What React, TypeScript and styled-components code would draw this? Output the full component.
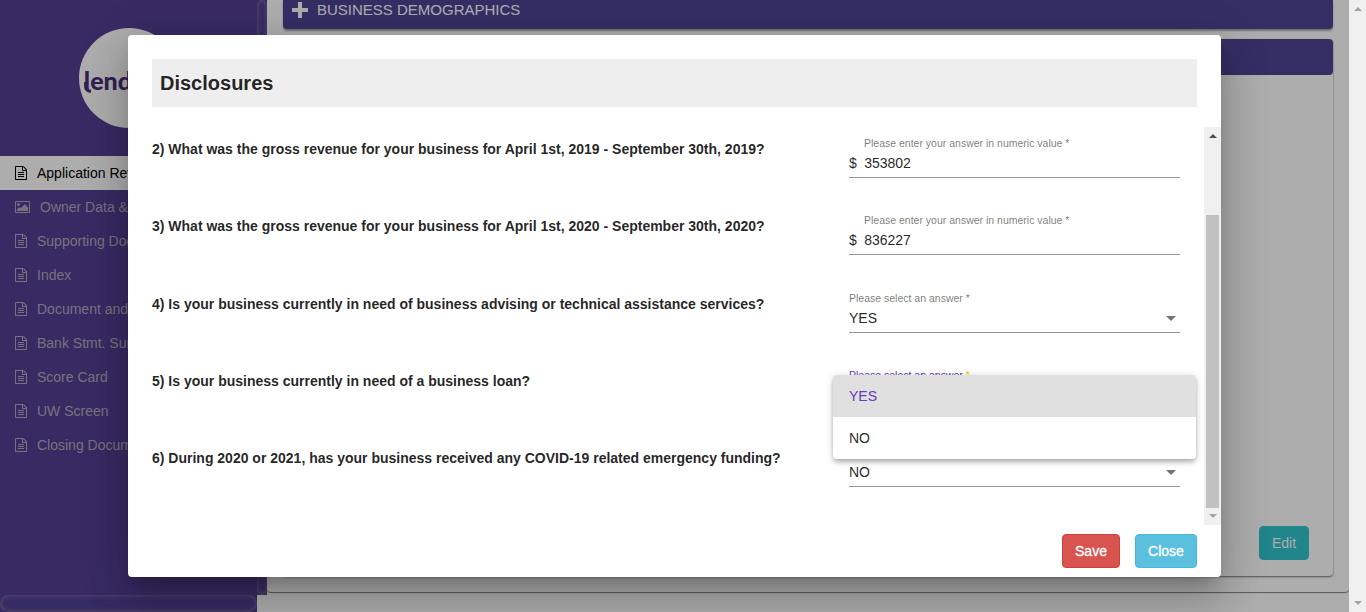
import React from 'react';
import styled, { createGlobalStyle } from 'styled-components';

const GlobalStyle = createGlobalStyle`
  * { box-sizing: border-box; }
  html, body { margin: 0; padding: 0; height: 100%; overflow: hidden; background: #fff; }
  body { font-family: "Liberation Sans", Arial, sans-serif; font-size: 14px; }
`;

const Page = styled.div`
  display: flex;
  width: 1366px;
  height: 612px;
  position: relative;
  overflow: hidden;
`;

const SidebarArea = styled.aside`
  flex: none;
  width: 267px;
  display: flex;
  flex-direction: column;
`;
const SidebarTop = styled.div`
  display: flex;
  height: 595px;
`;
const Sidebar = styled.div`
  width: 257px;
  background: #543f94;
  padding-top: 28px;
  overflow: hidden;
`;
const Thumb = styled.div<{ $horizontal?: boolean }>`
  flex: none;
  width: ${p => (p.$horizontal ? '257px' : '10px')};
  height: ${p => (p.$horizontal ? '17px' : '595px')};
  background: #543f94;
  &::after {
    content: '';
    display: block;
    width: 100%;
    height: 100%;
    border-radius: 10px;
    background: #503f94;
    box-shadow: inset 0 0 5px rgba(150, 140, 165, 0.85);
  }
`;
const Logo = styled.div`
  width: 100px;
  height: 100px;
  margin: 0 0 28px 79px;
  border-radius: 50%;
  background: #fff;
  color: #4b2f7c;
  display: flex;
  align-items: center;
  padding: 3px 0 0 4px;
  font: 900 25px/30px Lato, sans-serif;
`;
const LogoTail = styled.svg`
  flex: none;
  margin: 17px -9.6px 0 1.4px;
`;
const NavItem = styled.div<{ $active?: boolean }>`
  height: 34px;
  display: flex;
  align-items: center;
  gap: 10px;
  padding-left: 15px;
  white-space: nowrap;
  color: ${p => (p.$active ? '#000' : '#b0a9b8')};
  background: ${p => (p.$active ? '#fff' : 'transparent')};
`;

const Main = styled.main`
  flex: 1;
  background: #fff;
`;
const OuterCard = styled.section`
  height: 592px;
  padding: 0 16px;
  border-radius: 0 0 4px 4px;
  box-shadow: 0 1px 1px rgba(0, 0, 0, 0.5);
`;
const PanelHeader = styled.div<{ $height: number }>`
  height: ${p => p.$height}px;
  border-radius: 4px;
  background: #4e4596;
`;
const ClosedPanel = styled(PanelHeader)`
  border-radius: 0 0 4px 4px;
  margin-bottom: 10px;
  padding: 0 0 10px 9px;
  display: flex;
  align-items: center;
  gap: 9px;
  color: #fff;
  font-size: 15px;
  box-shadow: 0 2px 2px rgba(0, 0, 0, 0.35);
`;
const OpenPanel = styled.div`
  height: 537px;
  display: flex;
  flex-direction: column;
  justify-content: space-between;
  border-radius: 4px;
  box-shadow: 0 1px 2px rgba(0, 0, 0, 0.55);
`;

const Button = styled.button<{ $bg: string; $border: string; $width: number }>`
  width: ${p => p.$width}px;
  height: 34px;
  padding: 0;
  border: 1px solid ${p => p.$border};
  border-radius: 4px;
  background: ${p => p.$bg};
  color: #fff;
  font: 14px "Liberation Sans", Arial, sans-serif;
`;
const DialogButton = styled(Button)`
  -webkit-text-stroke: 0.3px #fff;
`;
const EditButton = styled(Button)`
  align-self: flex-end;
  margin: 0 24px 16px 0;
`;

const ScrollTrack = styled.div`
  flex: none;
  width: 17px;
  height: 100%;
  background: #f0f0f0;
  display: flex;
  flex-direction: column;
  justify-content: space-between;
  align-items: center;
  padding: 7px 0;
`;
const PageScroll = styled(ScrollTrack)`
  position: relative;
  z-index: 2;
`;
const ScrollThumb = styled.div`
  width: 13px;
  height: 293px;
  margin: 73px 0 2px;
  background: #c1c1c1;
`;

const Backdrop = styled.div`
  position: absolute;
  inset: 0 17px 0 0;
  background: rgba(0, 0, 0, 0.32);
`;
const Dialog = styled.div`
  position: absolute;
  left: 128px;
  top: 35px;
  width: 1093px;
  height: 542px;
  padding-top: 24px;
  border-radius: 4px;
  background: #fff;
  color: rgba(0, 0, 0, 0.87);
  display: flex;
  flex-direction: column;
  box-shadow: 0 11px 15px -7px rgba(0, 0, 0, 0.2), 0 24px 38px 3px rgba(0, 0, 0, 0.14),
    0 9px 46px 8px rgba(0, 0, 0, 0.12);
`;
const Title = styled.h2`
  flex: none;
  height: 48px;
  margin: 0 24px 20px;
  padding-left: 8px;
  background: #eee;
  font-size: 20px;
  line-height: 48px;
`;
const Scroller = styled.div`
  flex: none;
  height: 398px;
  display: flex;
  justify-content: space-between;
`;
const Questions = styled.div`
  padding-left: 24px;
`;
const Row = styled.div`
  display: flex;
  height: 77.25px;
`;
const Question = styled.div`
  width: 697px;
  padding-top: 12px;
  font-weight: 700;
  line-height: 20px;
`;
const Field = styled.div`
  width: 331px;
  height: 51px;
  border-bottom: 1px solid #949494;
`;
const Label = styled.div<{ $indent?: boolean; $focused?: boolean }>`
  padding: 9px 0 0 ${p => (p.$indent ? '15px' : '0')};
  height: 26px;
  font-size: 10.5px;
  line-height: 15px;
  color: ${p => (p.$focused ? '#673ab7' : 'rgba(0, 0, 0, 0.54)')};
  span { color: ${p => (p.$focused ? '#ffc107' : 'inherit')}; }
`;
const Value = styled.div`
  display: flex;
  align-items: center;
  line-height: 20px;
  gap: 7.4px;
`;
const Arrow = styled.i`
  margin: 1px 4px 0 auto;
  border: 5px solid transparent;
  border-top-color: #757575;
  border-bottom: 0;
`;
const Actions = styled.div`
  display: flex;
  justify-content: flex-end;
  gap: 15px;
  padding: 9px 24px 0;
`;
const Menu = styled.div`
  position: absolute;
  left: 833px;
  top: 375px;
  width: 363px;
  height: 84px;
  overflow: hidden;
  border-radius: 4px;
  background: #fff;
  box-shadow: 0 2px 4px -1px rgba(0, 0, 0, 0.2), 0 4px 5px rgba(0, 0, 0, 0.14),
    0 1px 10px rgba(0, 0, 0, 0.12);
`;
const Option = styled.div<{ $selected?: boolean }>`
  height: 42px;
  padding-left: 16px;
  line-height: 42px;
  color: ${p => (p.$selected ? '#673ab7' : 'rgba(0, 0, 0, 0.87)')};
  background: ${p => (p.$selected ? '#e0e0e0' : '#fff')};
`;

const FileIcon = () => (
  <svg width="12" height="14" viewBox="0 0 1536 1792" fill="currentColor">
    <path d="M1468 380q28 28 48 76t20 88v1152q0 40-28 68t-68 28h-1344q-40 0-68-28t-28-68v-1600q0-40 28-68t68-28h896q40 0 88 20t76 48zm-444-244v376h376q-10-29-22-41l-313-313q-12-12-41-22zm384 1528v-1024h-416q-40 0-68-28t-28-68v-416h-768v1536h1280zm-1024-864q0-14 9-23t23-9h704q14 0 23 9t9 23v64q0 14-9 23t-23 9h-704q-14 0-23-9t-9-23v-64zm736 224q14 0 23 9t9 23v64q0 14-9 23t-23 9h-704q-14 0-23-9t-9-23v-64q0-14 9-23t23-9h704zm0 256q14 0 23 9t9 23v64q0 14-9 23t-23 9h-704q-14 0-23-9t-9-23v-64q0-14 9-23t23-9h704z" />
  </svg>
);
const PictureIcon = () => (
  <svg width="15" height="12" viewBox="0 0 1920 1536" fill="currentColor">
    <path d="M640 448q0 80-56 136t-136 56-136-56-56-136 56-136 136-56 136 56 56 136zm1024 384v448h-1408v-192l320-320 160 160 512-512zm96-704h-1600q-13 0-22.5 9.500t-9.500 22.500v1216q0 13 9.500 22.500t22.500 9.500h1600q13 0 22.500-9.500t9.500-22.500v-1216q0-13-9.500-22.500t-22.500-9.500zm160 32v1216q0 66-47 113t-113 47h-1600q-66 0-113-47t-47-113v-1216q0-66 47-113t113-47h1600q66 0 113 47t47 113z" />
  </svg>
);
const PlusIcon = () => (
  <svg width="16" height="16" viewBox="0 0 16 16" fill="currentColor">
    <path d="M6 0h4v6h6v4h-6v6H6v-6H0V6h6z" />
  </svg>
);
const Caret = ({ down, color }: { down?: boolean; color: string }) => (
  <svg width="8" height="4" viewBox="0 0 8 4" fill={color}>
    <path d={down ? 'M0 0h8L4 4z' : 'M0 4h8L4 0z'} />
  </svg>
);

const NAV = [
  'Application Review',
  'Owner Data & Credit',
  'Supporting Documents',
  'Index',
  'Document and Notes',
  'Bank Stmt. Summary',
  'Score Card',
  'UW Screen',
  'Closing Documents',
];

type Item = { question: string; value: string; numeric?: boolean; focused?: boolean };
const QUESTIONS: Item[] = [
  { question: '2) What was the gross revenue for your business for April 1st, 2019 - September 30th, 2019?', value: '353802', numeric: true },
  { question: '3) What was the gross revenue for your business for April 1st, 2020 - September 30th, 2020?', value: '836227', numeric: true },
  { question: '4) Is your business currently in need of business advising or technical assistance services?', value: 'YES' },
  { question: '5) Is your business currently in need of a business loan?', value: 'YES', focused: true },
  { question: '6) During 2020 or 2021, has your business received any COVID-19 related emergency funding?', value: 'NO' },
];

export default function App() {
  return (
    <Page>
      <GlobalStyle />
      <SidebarArea>
        <SidebarTop>
          <Sidebar>
            <Logo>
              <LogoTail width="9" height="12" viewBox="0 0 9 12" fill="none" stroke="currentColor" strokeWidth="3.2">
                <path d="M1.700 0v4q0 5 5.300 5.400" />
              </LogoTail>
              lend
            </Logo>
            {NAV.map((label, i) => (
              <NavItem key={label} $active={i === 0}>
                {i === 1 ? <PictureIcon /> : <FileIcon />}
                {label}
              </NavItem>
            ))}
          </Sidebar>
          <Thumb />
        </SidebarTop>
        <Thumb $horizontal />
      </SidebarArea>
      <Main>
        <OuterCard>
          <ClosedPanel $height={29}>
            <PlusIcon />
            BUSINESS DEMOGRAPHICS
          </ClosedPanel>
          <OpenPanel>
            <PanelHeader $height={36} />
            <EditButton $bg="#31c5cf" $border="#31c5cf" $width={50}>Edit</EditButton>
          </OpenPanel>
        </OuterCard>
      </Main>
      <PageScroll>
        <Caret color="#a3a3a3" />
        <Caret color="#a3a3a3" down />
      </PageScroll>
      <Backdrop />
      <Dialog>
        <Title>Disclosures</Title>
        <Scroller>
          <Questions>
            {QUESTIONS.map(q => (
              <Row key={q.question}>
                <Question>{q.question}</Question>
                <Field>
                  <Label $indent={q.numeric} $focused={q.focused}>
                    {q.numeric ? 'Please enter your answer in numeric value' : 'Please select an answer'} <span>*</span>
                  </Label>
                  <Value>
                    {q.numeric && <span>$</span>}
                    {q.value}
                    {!q.numeric && <Arrow />}
                  </Value>
                </Field>
              </Row>
            ))}
          </Questions>
          <ScrollTrack>
            <Caret color="#505050" />
            <ScrollThumb />
            <Caret color="#a3a3a3" down />
          </ScrollTrack>
        </Scroller>
        <Actions>
          <DialogButton $bg="#d9534f" $border="#d43f3a" $width={58}>Save</DialogButton>
          <DialogButton $bg="#5bc0de" $border="#46b8da" $width={62}>Close</DialogButton>
        </Actions>
      </Dialog>
      <Menu>
        <Option $selected>YES</Option>
        <Option>NO</Option>
      </Menu>
    </Page>
  );
}
